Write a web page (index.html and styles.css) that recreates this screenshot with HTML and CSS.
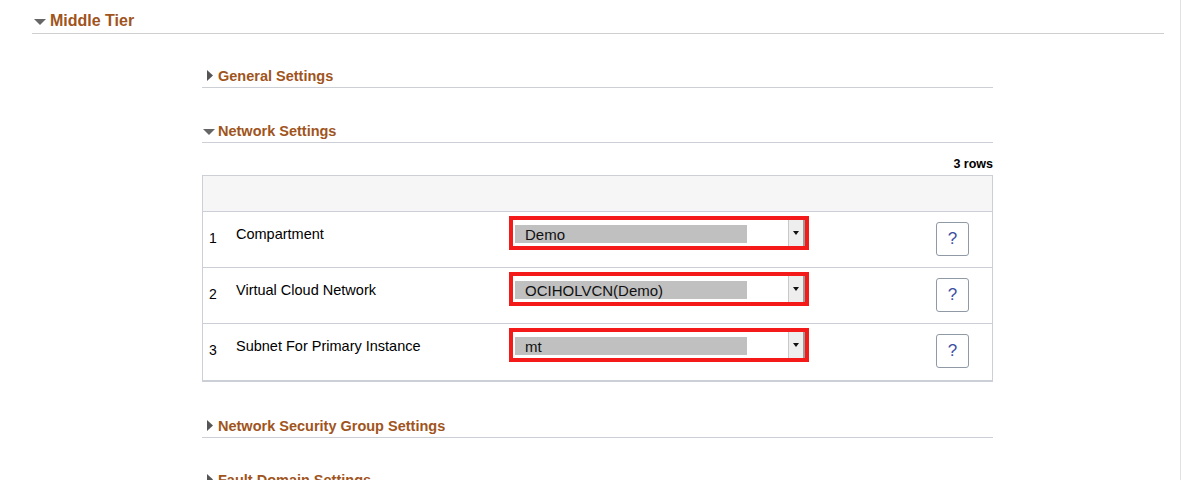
FILE: index.html
```html
<!DOCTYPE html>
<html>
<head>
<meta charset="utf-8">
<link rel="stylesheet" href="styles.css">
</head>
<body>
<div class="page">
  <div class="tier">
    <div class="tier-head">
      <svg class="tri-down-lg" width="12" height="6" viewBox="0 0 12 6"><polygon points="0,0 12,0 6,6" fill="#666"/></svg>
      <span>Middle Tier</span>
    </div>
    <div class="content">
      <div class="sec sec-general">
        <svg class="tri-right" width="6" height="11" viewBox="0 0 6 11"><polygon points="0,0 6,5.5 0,11" fill="#555"/></svg>
        <span>General Settings</span>
      </div>
      <div class="sec sec-network">
        <svg class="tri-down" width="12" height="6" viewBox="0 0 12 6"><polygon points="0,0 12,0 6,6" fill="#666"/></svg>
        <span>Network Settings</span>
      </div>
      <div class="rowcount">3 rows</div>
      <div class="grid">
        <div class="grid-head"></div>
        <div class="grid-row">
          <div class="num">1</div>
          <div class="label">Compartment</div>
          <div class="sel"><div class="sel-inner"><span class="sel-val">Demo</span><span class="sel-btn"><svg width="6" height="4" viewBox="0 0 6 4"><polygon points="0,0 6,0 3,4" fill="#111"/></svg></span></div></div>
          <div class="spacer"></div>
          <div class="help">?</div>
        </div>
        <div class="grid-row">
          <div class="num">2</div>
          <div class="label">Virtual Cloud Network</div>
          <div class="sel"><div class="sel-inner"><span class="sel-val">OCIHOLVCN(Demo)</span><span class="sel-btn"><svg width="6" height="4" viewBox="0 0 6 4"><polygon points="0,0 6,0 3,4" fill="#111"/></svg></span></div></div>
          <div class="spacer"></div>
          <div class="help">?</div>
        </div>
        <div class="grid-row last">
          <div class="num">3</div>
          <div class="label">Subnet For Primary Instance</div>
          <div class="sel"><div class="sel-inner"><span class="sel-val">mt</span><span class="sel-btn"><svg width="6" height="4" viewBox="0 0 6 4"><polygon points="0,0 6,0 3,4" fill="#111"/></svg></span></div></div>
          <div class="spacer"></div>
          <div class="help">?</div>
        </div>
      </div>
      <div class="sec sec-nsg">
        <svg class="tri-right" width="6" height="11" viewBox="0 0 6 11"><polygon points="0,0 6,5.5 0,11" fill="#555"/></svg>
        <span>Network Security Group Settings</span>
      </div>
      <div class="sec sec-fault">
        <svg class="tri-right" width="6" height="11" viewBox="0 0 6 11"><polygon points="0,0 6,5.5 0,11" fill="#555"/></svg>
        <span>Fault Domain Settings</span>
      </div>
    </div>
  </div>
</div>
</body>
</html>
```
FILE: styles.css
```css
html, body {
  margin: 0;
  padding: 0;
  background: #fff;
  overflow: hidden;
}
body {
  font-family: "Liberation Sans", Arial, sans-serif;
  color: #000;
}
.page {
  width: 1180px;
  height: 480px;
  border-right: 1px solid #e2e2e2;
  overflow: hidden;
}
.tier {
  margin-left: 32px;
  width: 1132px;
}
.tier-head {
  display: flex;
  align-items: center;
  height: 33px;
  padding-top: 7px;
  box-sizing: border-box;
  border-bottom: 1px solid #cfcfcf;
  color: #a0541c;
  font-weight: bold;
  font-size: 16px;
  margin-top: 1px;
}
.tier-head svg {
  margin-left: 2px;
  margin-right: 4px;
  margin-top: 2px;
}
.content {
  margin-left: 170px;
  width: 791px;
}
.sec {
  display: flex;
  align-items: center;
  height: 17px;
  padding-top: 1px;
  padding-bottom: 3px;
  border-bottom: 1px solid #ccd0d6;
  color: #a0541c;
  font-weight: bold;
  font-size: 14.5px;
}
.sec .tri-right {
  margin-left: 5px;
  margin-right: 5px;
}
.sec .tri-down {
  margin-left: 1px;
  margin-right: 3px;
  margin-top: 3px;
}
.sec-general { margin-top: 32px; }
.sec-network { margin-top: 33px; }
.sec-nsg { margin-top: 34px; }
.sec-fault { margin-top: 32px; }
.rowcount {
  text-align: right;
  font-weight: bold;
  font-size: 12.5px;
  line-height: 16px;
  margin-top: 13px;
  margin-bottom: 3px;
}
.grid {
  border: 1px solid #ccd0d6;
  border-bottom: 2px solid #ccd0d6;
}
.grid-head {
  height: 35px;
  background: #f6f6f6;
  border-bottom: 1px solid #ccd0d6;
}
.grid-row {
  display: grid;
  grid-template-columns: 33px 273px 300px 127px 33px 1fr;
  height: 55px;
  border-bottom: 1px solid #ccd0d6;
}
.grid-row.last {
  border-bottom: none;
  height: 56px;
}
.num {
  padding-left: 6px;
  margin-top: 17px;
  font-size: 14px;
  line-height: 18px;
}
.label {
  margin-top: 13px;
  font-size: 14.5px;
  line-height: 18px;
}
.sel {
  margin-top: 4px;
  height: 34px;
  box-sizing: border-box;
  border: 4px solid #f41a1a;
}
.sel-inner {
  display: flex;
  height: 100%;
  background: #fff;
  align-items: center;
  padding-left: 2px;
}
.sel-val {
  width: 222px;
  height: 18px;
  background: #c0c0c0;
  padding-left: 10px;
  font-size: 15px;
  line-height: 19px;
  color: #111;
  margin-top: 1px;
}
.sel-btn {
  margin-left: auto;
  width: 14px;
  height: 26px;
  background: #eeeeee;
  border-left: 1px solid #c8c8c8;
  border-right: 2px solid #9a9a9a;
  display: flex;
  align-items: center;
  justify-content: center;
}
.help {
  margin-top: 10px;
  height: 34px;
  box-sizing: border-box;
  border: 1px solid #8f9aa6;
  border-radius: 3px;
  color: #3b4fa5;
  font-size: 17px;
  display: flex;
  align-items: center;
  justify-content: center;
}
```
